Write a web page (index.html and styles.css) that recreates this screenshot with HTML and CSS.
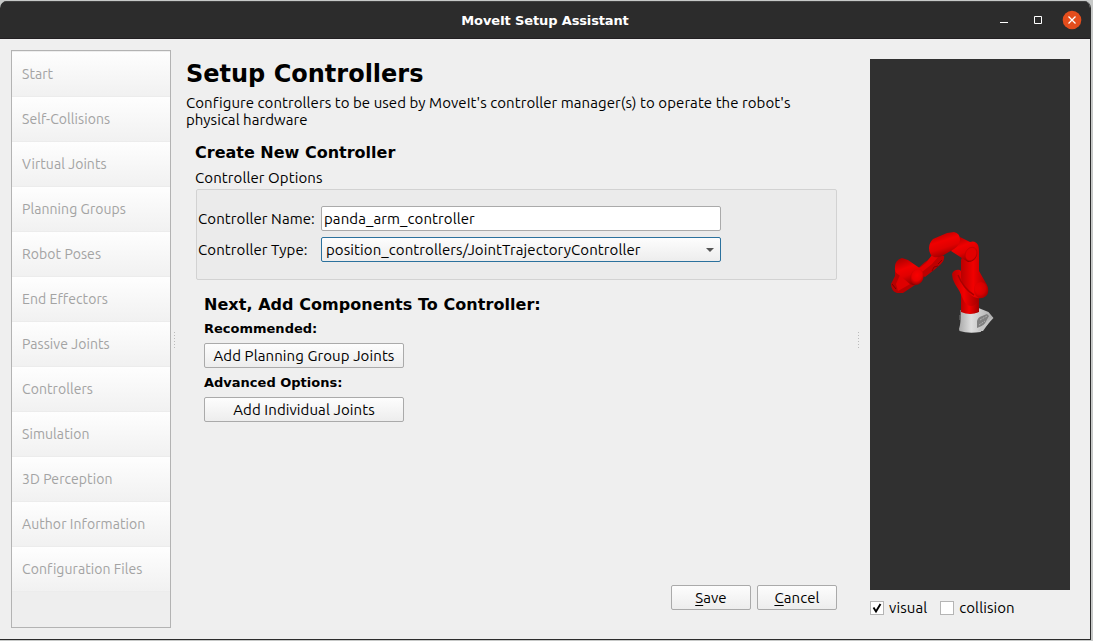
FILE: index.html
```html
<!DOCTYPE html>
<html lang="en">
<head>
<meta charset="utf-8">
<title>MoveIt Setup Assistant</title>
<link rel="stylesheet" href="styles.css">
</head>
<body>
<div class="window">
  <header class="titlebar">
    <h1 class="window-title">MoveIt Setup Assistant</h1>
    <div class="window-controls">
      <svg class="control" viewBox="0 0 20 20"><path d="M6 12.5h8" stroke="#fff" fill="none"/></svg>
      <svg class="control" viewBox="0 0 20 20"><path d="M6.5 6.500h7v7h-7z" stroke="#fff" fill="none"/></svg>
      <svg class="control" viewBox="0 0 20 20"><circle cx="10" cy="10" r="9.300" fill="#e44d1c"/><path d="M6.500 6.500l7 7m0-7l-7 7" stroke="#fff" stroke-width="1.300" fill="none"/></svg>
    </div>
  </header>
  <div class="body">
    <nav class="sidebar">
      <div class="nav-item"><span>Start</span></div>
      <div class="nav-item"><span>Self-Collisions</span></div>
      <div class="nav-item"><span>Virtual Joints</span></div>
      <div class="nav-item"><span>Planning Groups</span></div>
      <div class="nav-item"><span>Robot Poses</span></div>
      <div class="nav-item"><span>End Effectors</span></div>
      <div class="nav-item"><span>Passive Joints</span></div>
      <div class="nav-item"><span>Controllers</span></div>
      <div class="nav-item"><span>Simulation</span></div>
      <div class="nav-item"><span>3D Perception</span></div>
      <div class="nav-item"><span>Author Information</span></div>
      <div class="nav-item"><span>Configuration Files</span></div>
    </nav>
    <div class="grip"></div>
    <main class="content">
      <h2 class="page-title">Setup Controllers</h2>
      <p class="intro">Configure controllers to be used by MoveIt's controller manager(s) to operate the robot's<br>physical hardware</p>
      <section class="form">
        <h3 class="heading">Create New Controller</h3>
        <div class="group-label">Controller Options</div>
        <div class="group">
          <div class="row"><label class="row-label">Controller Name:</label><div class="input">panda_arm_controller</div></div>
          <div class="row"><label class="row-label">Controller Type:</label><div class="input select"><span>position_controllers/JointTrajectoryController</span><svg class="arrow" viewBox="0 0 8 4"><path d="M0 0h8l-4 4z" fill="#555"/></svg></div></div>
        </div>
        <div class="components">
          <h3 class="heading next">Next, Add Components To Controller:</h3>
          <h4 class="subheading">Recommended:</h4>
          <div class="button wide">Add Planning Group Joints</div>
          <h4 class="subheading">Advanced Options:</h4>
          <div class="button wide">Add Individual Joints</div>
        </div>
      </section>
      <div class="actions">
        <div class="button"><span><span class="key">S</span>ave</span></div>
        <div class="button"><span><span class="key">C</span>ancel</span></div>
      </div>
    </main>
    <div class="grip"></div>
    <aside class="preview">
      <div class="viewport">
        <svg class="robot" viewBox="0 0 140 125">
          <defs>
            <linearGradient id="diag" x1=".3" y1="0" x2=".7" y2="1"><stop offset="0" stop-color="#b00000"/><stop offset=".35" stop-color="#f00000"/><stop offset=".6" stop-color="#e00000"/><stop offset="1" stop-color="#850000"/></linearGradient>
            <linearGradient id="tube" x1="0" x2="1"><stop offset="0" stop-color="#b80000"/><stop offset=".45" stop-color="#f20000"/><stop offset="1" stop-color="#a00000"/></linearGradient>
            <radialGradient id="ball" cx=".45" cy=".4" r=".6"><stop offset="0" stop-color="#fa0000"/><stop offset=".6" stop-color="#e80000"/><stop offset="1" stop-color="#a00000"/></radialGradient>
            <linearGradient id="metal" x1="0" x2="1"><stop offset="0" stop-color="#aaa"/><stop offset=".35" stop-color="#dedede"/><stop offset="1" stop-color="#aaa"/></linearGradient>
          </defs>
          <path d="M90.500 90q8 5 18 2v-4l10 4 5 6-13 14q-12 2-21-1-1-2 .5-6 1-6 .5-15z" fill="url(#metal)"/>
          <path d="M90 95v5" stroke="#777"/>
          <path d="M107 101q1-4 5-5l5-2 2 2-5 9-7 3z" fill="#808080"/>
          <path d="M110 100l7-4M109 105l6-4" stroke="#bbb" stroke-width=".8" stroke-dasharray="2 1"/>
          <path d="M108 111l4-5 11-9-10 14z" fill="#c4c4c4"/>
          <path d="M91 74h18v18q-9 4-18 0z" fill="url(#tube)"/>
          <path d="M82 54q2-5 8-4l7 8 12 16-1 7q-3 5-7 5-5 0-8-7-3-8-8-15-3-5-3-10z" fill="url(#tube)"/>
          <path d="M91 40l6-17q8-4 11 2 1 2 1 8v18l8 14q3 7-1 11-5 4-12 1-6-3-9-9-4-6-4-11z" fill="url(#tube)"/>
          <ellipse cx="111" cy="70" rx="7" ry="8" fill="url(#ball)" opacity=".6"/>
          <path d="M88 55q5 13 16 20" fill="none" stroke="#a80000" stroke-width="1.500"/>
          <path d="M90 17l14 7q4 4 3 11-2 7-9 7l-17-11z" fill="url(#diag)"/>
          <ellipse cx="101" cy="34" rx="5.500" ry="7" transform="rotate(28 101 34)" fill="#e20000" stroke="#b40000" stroke-width=".5"/>
          <path d="M49 48l3-2 3 1-3 2z" fill="#c5c5c5"/>
          <path d="M62 33l12 3q1 4-3 8l-7 6-9 7-10-6 10-9q7-4 7-9z" fill="#be0000"/>
          <path d="M62 35l6 2-6 7-10 8-5-2 9-7z" fill="#e40000"/>
          <path d="M62 51l2-4 4-1M68 44l4-4" fill="none" stroke="#850000"/>
          <path d="M60 33q-3-8 3-14l14-6 7-1q6 1 6 8-1 6-6 9L72 36q-4 2-8 1-3-1-4-4z" fill="url(#diag)"/>
          <path d="M25 45v11l-4 8q0 7 6 9h6l12-8-6-15z" fill="#b80000"/>
          <path d="M30 55l-4 9 2 7 14-8-5-8z" fill="#df0000"/>
          <path d="M25 47q0-7 7-9l6 2 13 9q5 7 0 13-6 5-11 2L29 55q-5-3-4-8z" fill="url(#diag)"/>
          <ellipse cx="47" cy="57" rx="6.500" ry="8" transform="rotate(22 47 57)" fill="url(#ball)"/>
          <path d="M22 64l4 5" stroke="#740000"/>
        </svg>
      </div>
      <div class="checks">
        <span class="check"><span class="box"><svg class="tick" viewBox="0 0 12 12"><path d="M2.500 5.500l2.500 4L9.500 2" fill="none" stroke="#000" stroke-width="1.900"/></svg></span><span>visual</span></span>
        <span class="check"><span class="box"></span><span>collision</span></span>
      </div>
    </aside>
  </div>
</div>
</body>
</html>
```
FILE: styles.css
```css
* { box-sizing: border-box; }
html, body { margin: 0; padding: 0; }
body {
  width: 1093px; height: 641px; overflow: hidden;
  padding: 1px 2px 1px 0;
  background: #c7c9c8;
  color: #000;
  font: 15px/17px Ubuntu, "Noto Sans", sans-serif;
  letter-spacing: .09px;
  white-space: nowrap;
}
h1, h2, h3, h4, p { margin: 0; }
.window {
  display: flex; flex-direction: column; height: 639px;
  border: solid #2c2c2c; border-width: 0 1px 1px 0;
  border-radius: 7px 7px 0 0; overflow: hidden; background: #efefef;
}
.titlebar {
  display: grid; grid-template-columns: 1fr auto 1fr; align-items: center;
  height: 38px; flex: none; background: #2c2c2c;
  border-top: 1px solid #414141; border-bottom: 1px solid #221f22; color: #fff;
}
.window-title {
  grid-column: 2; font: bold 13px/18px "DejaVu Sans", sans-serif;
  letter-spacing: -.14px; padding-top: 2px;
}
.window-controls { display: flex; gap: 14px; justify-self: end; padding-right: 8px; }
.control { width: 20px; height: 20px; display: block; }
.body { display: flex; flex: 1; padding: 11px 20px 0 11px; }
.sidebar {
  width: 160px; height: 578px; border: 1px solid #b3b3b3; background: #eee;
  color: #a3a3a3; font-size: 14px; letter-spacing: .07px; padding-top: 1px;
}
.nav-item {
  height: 45px; padding: 0 0 0 10px; display: flex; align-items: center;
  background: linear-gradient(#fefefe, #f1f1f1);
  border-bottom: 1px solid #ececec;
}
.grip {
  width: 3px; height: 17px; margin: 281px 6px 0 2px; flex: none;
  background: radial-gradient(circle, #bbb 0 .6px, transparent .8px) 0 0 / 3px 3px;
}
.content { width: 673px; flex: none; padding: 8px 0 0 4px; }
.page-title { font: bold 24px/32px "DejaVu Sans", sans-serif; letter-spacing: 0; }
.intro { padding-top: 4px; letter-spacing: .06px; }
.form { padding: 15px 0 0 9px; }
.heading { font: bold 16px/20px "DejaVu Sans", sans-serif; letter-spacing: 0; }
.next { letter-spacing: .05px; }
.group-label { margin-top: 6px; }
.group {
  width: 641px; height: 91px; margin: 3px 0 0 1px; padding: 16px 1px;
  border: 1px solid #d2d2d2; border-radius: 2px; background: #ebebeb;
  display: flex; flex-direction: column; gap: 6px;
}
.row { display: flex; align-items: center; }
.row-label { width: 123px; }
.input {
  width: 400px; height: 25px; border: 1px solid #aaa; border-radius: 2px;
  background: #fff; padding: 3px 2px;
}
.select {
  display: flex; align-items: center; justify-content: space-between;
  border-color: #2b719d; background: linear-gradient(#fdfdfd, #ededed);
  padding: 0 6px 0 4px;
}
.arrow { width: 8px; height: 4px; }
.components { padding: 15px 0 0 9px; }
.subheading { margin: 6px 0; font: bold 13px/17px "DejaVu Sans", sans-serif; letter-spacing: 0; }
.next + .subheading { margin-top: 5px; }
.button {
  width: 80px; height: 25px; border: 1px solid #aaa; border-radius: 2px;
  background: linear-gradient(#fdfdfd, #ededed);
  display: flex; align-items: center; justify-content: center;
}
.wide { width: 200px; }
.actions { display: flex; gap: 6px; justify-content: flex-end; padding: 163px 18px 0 0; }
.key { text-decoration: underline 1px; text-underline-offset: 2px; }
.preview { padding: 9px 0 0 4px; flex: none; }
.viewport { width: 200px; height: 531px; background: #303030; padding-top: 161px; }
.robot { width: 140px; height: 125px; display: block; }
.checks { display: flex; gap: 13px; padding-top: 9px; }
.check { display: flex; gap: 5px; align-items: center; }
.box { width: 14px; height: 14px; border: 1px solid #b5b5b5; background: #fff; }
.tick { display: block; width: 12px; height: 12px; }
```
